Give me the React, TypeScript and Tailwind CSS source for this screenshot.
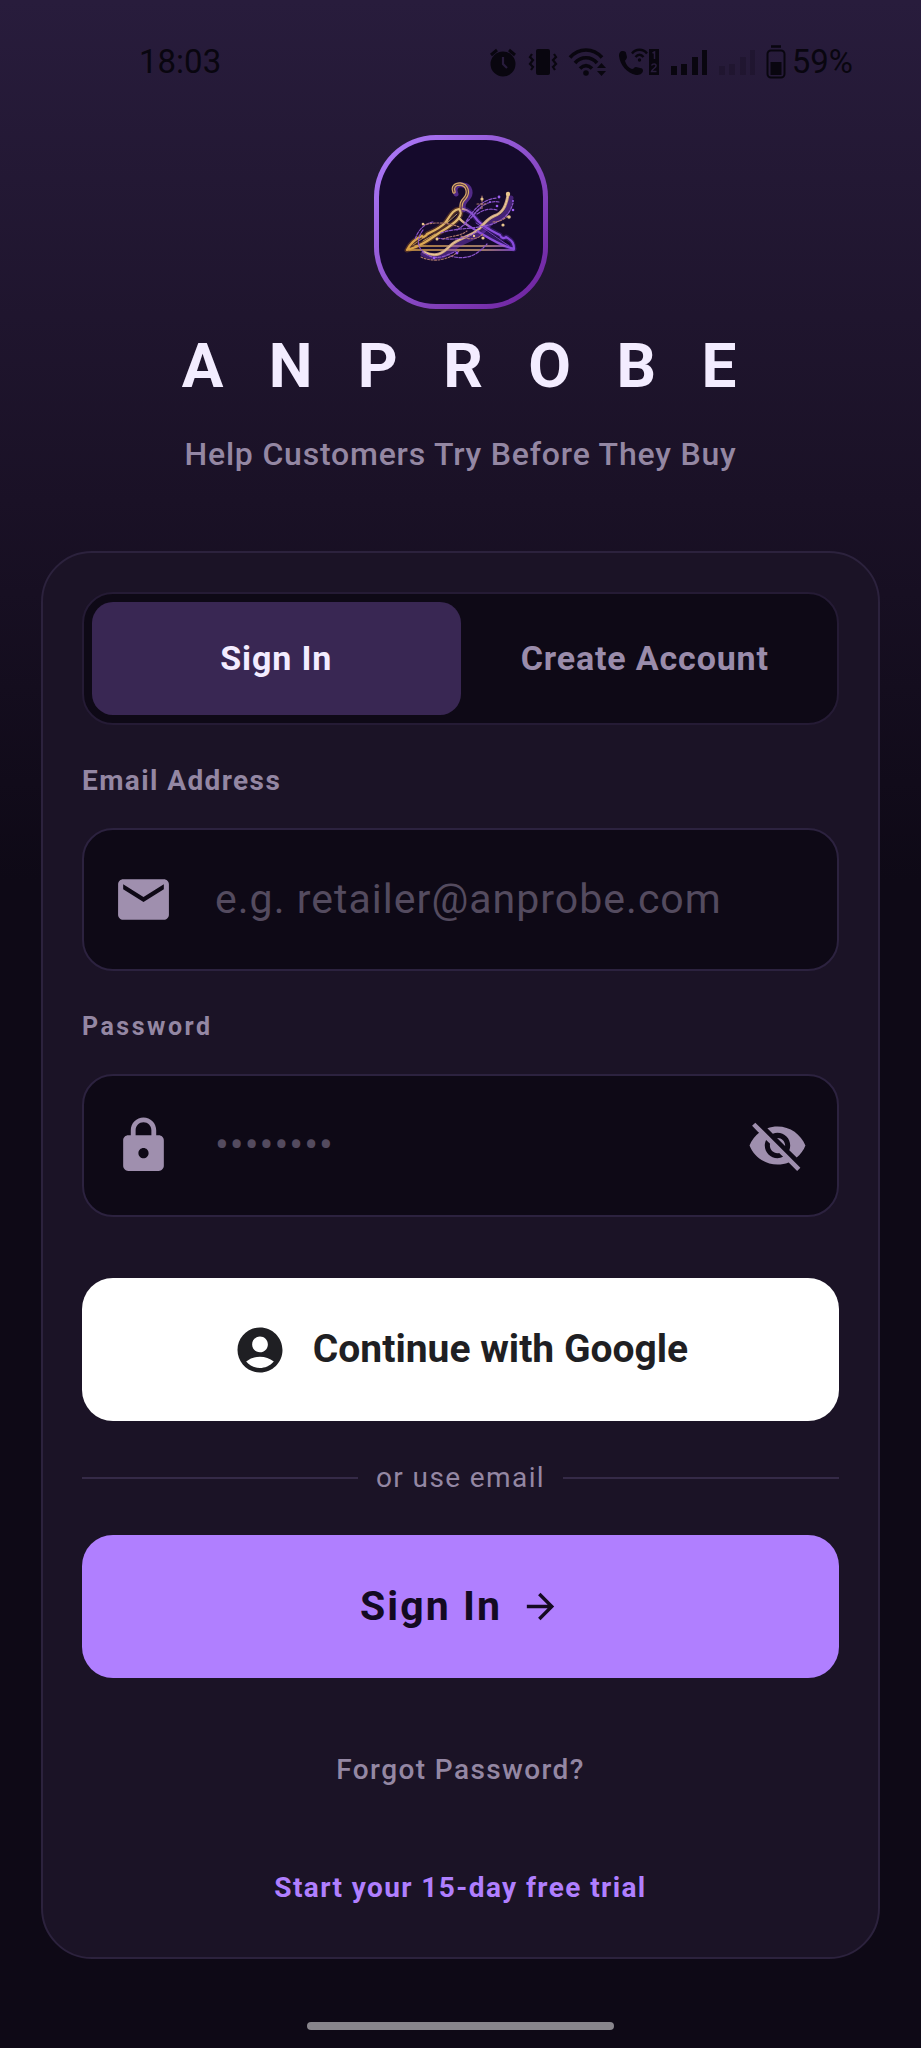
import { useState } from 'react';
import type { ReactNode } from 'react';
import { MdAccountCircle, MdArrowForward, MdEmail, MdLock, MdVisibilityOff } from 'react-icons/md';

function StatusBar() {
    return (
        <header className="flex h-[124px] items-center justify-between pl-[139px] pr-[68px] text-[33px] text-[#09060f]">
            <span>18:03</span>
            <div className="flex items-center gap-[10px]">
                {/* Alarm */}
                <svg className="h-[30px] w-[30px]" viewBox="0 0 30 30" fill="none" stroke="currentColor">
                    <circle cx="15" cy="17" r="12.5" fill="currentColor" stroke="none" />
                    <path d="M3 8l6-5M27 8l-6-5" strokeWidth="3" />
                    <path d="M15 10v7l4 4" stroke="#281c3c" strokeWidth="2.2" />
                </svg>
                {/* Vibrate */}
                <svg className="h-[30px] w-[30px]" viewBox="0 0 30 30" fill="none" stroke="currentColor" strokeWidth="2.2">
                    <rect x="8" y="2" width="14" height="26" rx="2" fill="currentColor" stroke="none" />
                    <path d="M4 7l-2 3 3 3-3 4 3 3-2 3M26 7l2 3-3 3 3 4-3 3 2 3" />
                </svg>
                {/* Wi-Fi */}
                <svg className="h-[30px] w-[40px]" viewBox="0 0 40 30" fill="none" stroke="currentColor" strokeWidth="3.6">
                    <path d="M2 10.500c9-10 23-10 32 0M7 16c6-7 16-7 22 0M12 21.500c4-4 8-4 12 0" />
                    <circle cx="18" cy="26" r="2.800" fill="currentColor" stroke="none" />
                    <path d="M29 21l4.500-5 4.500 5zM29 24h9l-4.500 5z" fill="currentColor" stroke="none" />
                </svg>
                {/* Wi-Fi calling, both SIMs */}
                <svg className="h-[30px] w-[42px]" viewBox="0 0 42 30" fill="none" stroke="currentColor">
                    <path
                        d="M5 4c-3 0-4 2-4 5 1 9 8 17 17 19 4 0 6-1 7-4 0-2-1-3-3-3l-4-1c-2 0-2 2-4 2-3-1-6-4-7-8 0-1 2-2 2-4l-1-4c0-1-1-2-3-2z"
                        fill="currentColor"
                        stroke="none"
                    />
                    <path d="M14 6.500c4-5 11-5 15 0M17.500 10c2.500-3 5.500-3 8 0" strokeWidth="2.4" />
                    <circle cx="21.500" cy="13" r="1.700" fill="currentColor" stroke="none" />
                    <path d="M31 2h10v26H31z" fill="currentColor" stroke="none" />
                    <path d="M34.500 6l2-1v7M33.500 18.500c1-2 5-2 4.500.5 0 2-4 3-4.500 5.500h5" stroke="#281c3c" strokeWidth="1.500" />
                </svg>
                {/* Signal bars */}
                <svg className="h-[30px] w-[38px]" viewBox="0 0 38 30" fill="currentColor">
                    <path d="M1 19h6v9H1zM11 17h6v11h-6zM22 10h6v18h-6zM32 3h5v25h-5z" />
                </svg>
                <svg className="h-[30px] w-[38px] opacity-20" viewBox="0 0 38 30" fill="currentColor">
                    <path d="M1 19h6v9H1zM11 17h6v11h-6zM22 10h6v18h-6zM32 3h5v25h-5z" />
                </svg>
                <div className="flex items-center gap-[6px]">
                    <svg className="h-[34px] w-[20px]" viewBox="0 0 20 34" fill="none" stroke="currentColor" strokeWidth="2">
                        <path d="M5 1.500h10" strokeWidth="2.500" />
                        <rect x="1.500" y="5.500" width="17" height="27" rx="3.500" />
                        <path d="M4.500 17h11v13h-11z" fill="currentColor" stroke="none" />
                    </svg>
                    <span>59%</span>
                </div>
            </div>
        </header>
    );
}

function Logo() {
    return (
        <div className="rounded-[62px] bg-linear-to-br from-[#b07fff] to-[#6a1b9a] p-[5px]">
            <svg className="h-[164px] w-[164px] rounded-[57px] bg-[#150a2c]" viewBox="0 0 164 164" fill="none" strokeLinecap="round" strokeLinejoin="round">
                <defs>
                    <linearGradient id="hanger" x1="28" y1="0" x2="136" y2="0" gradientUnits="userSpaceOnUse">
                        <stop offset="0" stopColor="#d9a044" />
                        <stop offset="0.500" stopColor="#e2bd78" />
                        <stop offset="0.580" stopColor="#8c50d8" />
                        <stop offset="1" stopColor="#8a4be0" />
                    </linearGradient>
                    <linearGradient id="base" x1="28" y1="0" x2="136" y2="0" gradientUnits="userSpaceOnUse">
                        <stop offset="0" stopColor="#d9a044" />
                        <stop offset="0.700" stopColor="#c99a78" />
                        <stop offset="1" stopColor="#8a4be0" />
                    </linearGradient>
                </defs>
                {/* Hook */}
                <path d="M77 54c-3-6 1-10 7-9 8 1 9 9 4 14-4 4-4 6-4 11" stroke="#7b3fc4" strokeWidth="5" opacity="0.600" />
                <path d="M75 52c-2-5 1-8 6-8 8 1 9 9 5 14-4 4-4 6-4 11" stroke="#d8ab68" strokeWidth="3.500" />
                <path d="M75 52c-2-5 1-8 6-8 8 1 9 9 5 14-4 4-4 6-4 11" stroke="#5b3540" strokeWidth="1.200" />
                {/* Shoulders */}
                <path
                    d="M80 69c-7 1-9 8-14 14-6 6-12 8-18 11-1 2-4 4-5 2-7 3-12 8-15 14 12-3 22-10 32-17 8-5 15-9 19-14 4-5 3-7 1-10z"
                    stroke="#a86520"
                    strokeWidth="5"
                    opacity="0.400"
                />
                <path d="M84 69c7 1 10 6 15 12 7 7 14 10 22 14 1 3 4 4 6 2 7 4 7 6 8 12-12-3-20-10-30-16" stroke="#5a2bb0" strokeWidth="5" opacity="0.400" />
                <path
                    d="M80 69c-7 1-9 8-14 14-6 6-12 8-18 11-1 2-4 4-5 2-7 3-12 8-15 14 12-3 22-10 32-17 8-5 15-9 19-14 4-5 3-7 1-10zM84 69c7 1 10 6 15 12 7 7 14 10 22 14 1 3 4 4 6 2 7 4 8 7 8 12-12-3-22-9-32-15-11-7-18-10-22-15"
                    stroke="url(#hanger)"
                    strokeWidth="2.200"
                />
                <path d="M34 105l35-24M130 106L97 83M68 83l10-9M44 101l12-7" stroke="url(#hanger)" strokeWidth="1" opacity="0.800" />
                <path d="M30 110h105" stroke="url(#base)" strokeWidth="1.500" />
                <path d="M36 106h90" stroke="url(#base)" strokeWidth="1.500" />
                {/* Ribbon */}
                <path d="M44 114c13 7 22 2 30-5 8-8 20-9 29-17 6-6 8-10 15-13 9-3 12-10 14-21" stroke="#8041cf" strokeWidth="5" opacity="0.450" />
                <path d="M45 112c13 6 19 1 26-6 8-8 20-9 29-17 6-6 8-10 15-13 9-3 12-10 14-21" stroke="#c9a184" strokeWidth="3" />
                <path d="M45 112c13 6 19 1 26-6 8-8 20-9 29-17 6-6 8-10 15-13 9-3 12-10 14-21" stroke="#f0cf96" strokeWidth="1" />
                <path
                    d="M44 90c-6 8-7 18 3 24 10 7 20 2 30-3M85 85c8-14 18-26 33-27M92 78c7-10 16-18 28-16M54 82c-10 2-16 10-18 18M71 116c18 5 28-2 37-12M62 93c16-6 36-3 54-10 9-4 15-9 18-20M78 90c10-6 16-16 24-22M58 98c14 2 30 2 42-8M98 74c6-4 12-6 20-4"
                    stroke="#8b55c9"
                    strokeWidth="1.200"
                    strokeDasharray="3 1.500"
                />
                <path
                    d="M44 85c12-3 24-3 36 2M64 99c10-4 16-2 24-8M103 56v13M98 64h10M42 117c12 6 28 3 38-6M82 96c8 4 16 4 22-2M114 82c8 0 12-4 15-6"
                    stroke="#b07a6d"
                    strokeWidth="1.100"
                    strokeDasharray="2 1.500"
                />
                {/* Sparkles */}
                <g fill="#e8c58c">
                    <circle cx="129" cy="54" r="2.200" />
                    <circle cx="130" cy="77" r="1.800" />
                    <circle cx="124" cy="85" r="1.600" />
                    <circle cx="103" cy="59" r="1.600" />
                    <circle cx="58" cy="99" r="1.500" />
                    <circle cx="104" cy="98" r="1.600" />
                    <circle cx="95" cy="96" r="1.200" />
                    <circle cx="44" cy="84" r="1.300" />
                </g>
                <g fill="#9a5cf0">
                    <circle cx="120" cy="57" r="1.400" />
                    <circle cx="134" cy="70" r="1.300" />
                    <circle cx="118" cy="66" r="1.300" />
                    <circle cx="111" cy="62" r="1" />
                    <circle cx="78" cy="113" r="1.400" />
                    <circle cx="55" cy="118" r="1.300" />
                    <circle cx="134" cy="61" r="1" />
                </g>
            </svg>
        </div>
    );
}

interface FieldProps {
    id: string;
    type: string;
    placeholder: string;
    icon: ReactNode;
    action?: ReactNode;
}

function Field({ id, type, placeholder, icon, action }: FieldProps) {
    return (
        <div className="flex h-[143px] items-center gap-[41px] rounded-[31px] border-2 border-[#2c223f] bg-[#0e0916] px-[29px] text-[#9f8fae]">
            {icon}
            <input
                id={id}
                type={type}
                placeholder={placeholder}
                className="min-w-0 flex-1 bg-transparent text-[41px] tracking-wide text-[#f3ecff] outline-none placeholder:text-[#544b5f]"
            />
            {action}
        </div>
    );
}

export default function App() {
    const [mode, setMode] = useState('signin');
    const [showPassword, setShowPassword] = useState(false);

    const tabClass = (active: boolean) =>
        active
            ? 'flex-1 rounded-[21px] bg-[#392753] text-[#f3ecff]'
            : 'flex-1 rounded-[21px] text-[#9a8cab]';

    return (
        <div className="flex min-h-screen flex-col bg-[#0e0916] bg-linear-to-b from-[#281c3c] via-[#1a1126] via-[500px] to-[#0e0916] to-[880px] font-[Roboto,sans-serif]">
            <StatusBar />

            <main className="flex flex-1 flex-col items-center px-[41px]">
                <div className="pt-[11px]">
                    <Logo />
                </div>
                <h1 className="mt-[21px] pl-[12px] text-[62px] leading-[72px] font-bold tracking-[15px] whitespace-nowrap text-[#f3ecff]">
                    A N P R O B E
                </h1>
                <p className="mt-[34px] text-[32px] leading-[36px] font-medium tracking-wide text-[#9487a3]">
                    Help Customers Try Before They Buy
                </p>

                <section className="mt-[79px] w-full rounded-[51px] border-2 border-[#2c223d] bg-[#1b1326] px-[39px] pt-[39px] pb-[51px]">
                    <div className="flex h-[133px] rounded-[31px] border-2 border-[#251b35] bg-[#0e0916] p-2 text-[34px] font-bold tracking-wide">
                        <button type="button" className={tabClass(mode === 'signin')} onClick={() => setMode('signin')}>
                            Sign In
                        </button>
                        <button type="button" className={tabClass(mode === 'create')} onClick={() => setMode('create')}>
                            Create Account
                        </button>
                    </div>

                    <form onSubmit={(e) => e.preventDefault()}>
                        <label htmlFor="email" className="mt-[38px] mb-[29px] block text-[28px] leading-[36px] font-bold tracking-wider text-[#9487a3]">
                            Email Address
                        </label>
                        <Field id="email" type="email" placeholder="e.g. retailer@anprobe.com" icon={<MdEmail className="size-[61px] shrink-0" />} />

                        <label htmlFor="password" className="mt-[38px] mb-[29px] block text-[25px] leading-[36px] font-bold tracking-widest text-[#9487a3]">
                            Password
                        </label>
                        <Field
                            id="password"
                            type={showPassword ? 'text' : 'password'}
                            placeholder="••••••••"
                            icon={<MdLock className="size-[61px] shrink-0" />}
                            action={
                                <button type="button" aria-label="Show password" onClick={() => setShowPassword(!showPassword)}>
                                    <MdVisibilityOff className="size-[61px]" />
                                </button>
                            }
                        />

                        <button
                            type="button"
                            className="mt-[61px] flex h-[143px] w-full items-center justify-center gap-[26px] rounded-[31px] bg-white text-[39px] font-bold text-[#1f1f23]"
                        >
                            <MdAccountCircle className="size-[54px]" />
                            Continue with Google
                        </button>

                        <div className="my-[39px] flex items-center gap-[18px] text-[28px] leading-[36px] tracking-wider text-[#9487a3]">
                            <span className="h-[2px] flex-1 bg-[#352a47]" />
                            or use email
                            <span className="h-[2px] flex-1 bg-[#352a47]" />
                        </div>

                        <button
                            type="submit"
                            className="flex h-[143px] w-full items-center justify-center gap-[18px] rounded-[31px] bg-[#b07fff] text-[41px] font-bold tracking-wider text-[#140a22]"
                        >
                            Sign In
                            <MdArrowForward className="size-[41px]" />
                        </button>
                    </form>

                    <div className="mt-[74px] flex flex-col items-center gap-[82px] text-[28px] leading-[36px] tracking-wider">
                        <a href="#forgot" className="font-medium text-[#9487a3]">
                            Forgot Password?
                        </a>
                        <a href="#trial" className="font-bold text-[#b07fff]">
                            Start your 15-day free trial
                        </a>
                    </div>
                </section>
            </main>

            <div className="mx-auto mb-[18px] h-[8px] w-1/3 rounded-full bg-[#88858c]" />
        </div>
    );
}
